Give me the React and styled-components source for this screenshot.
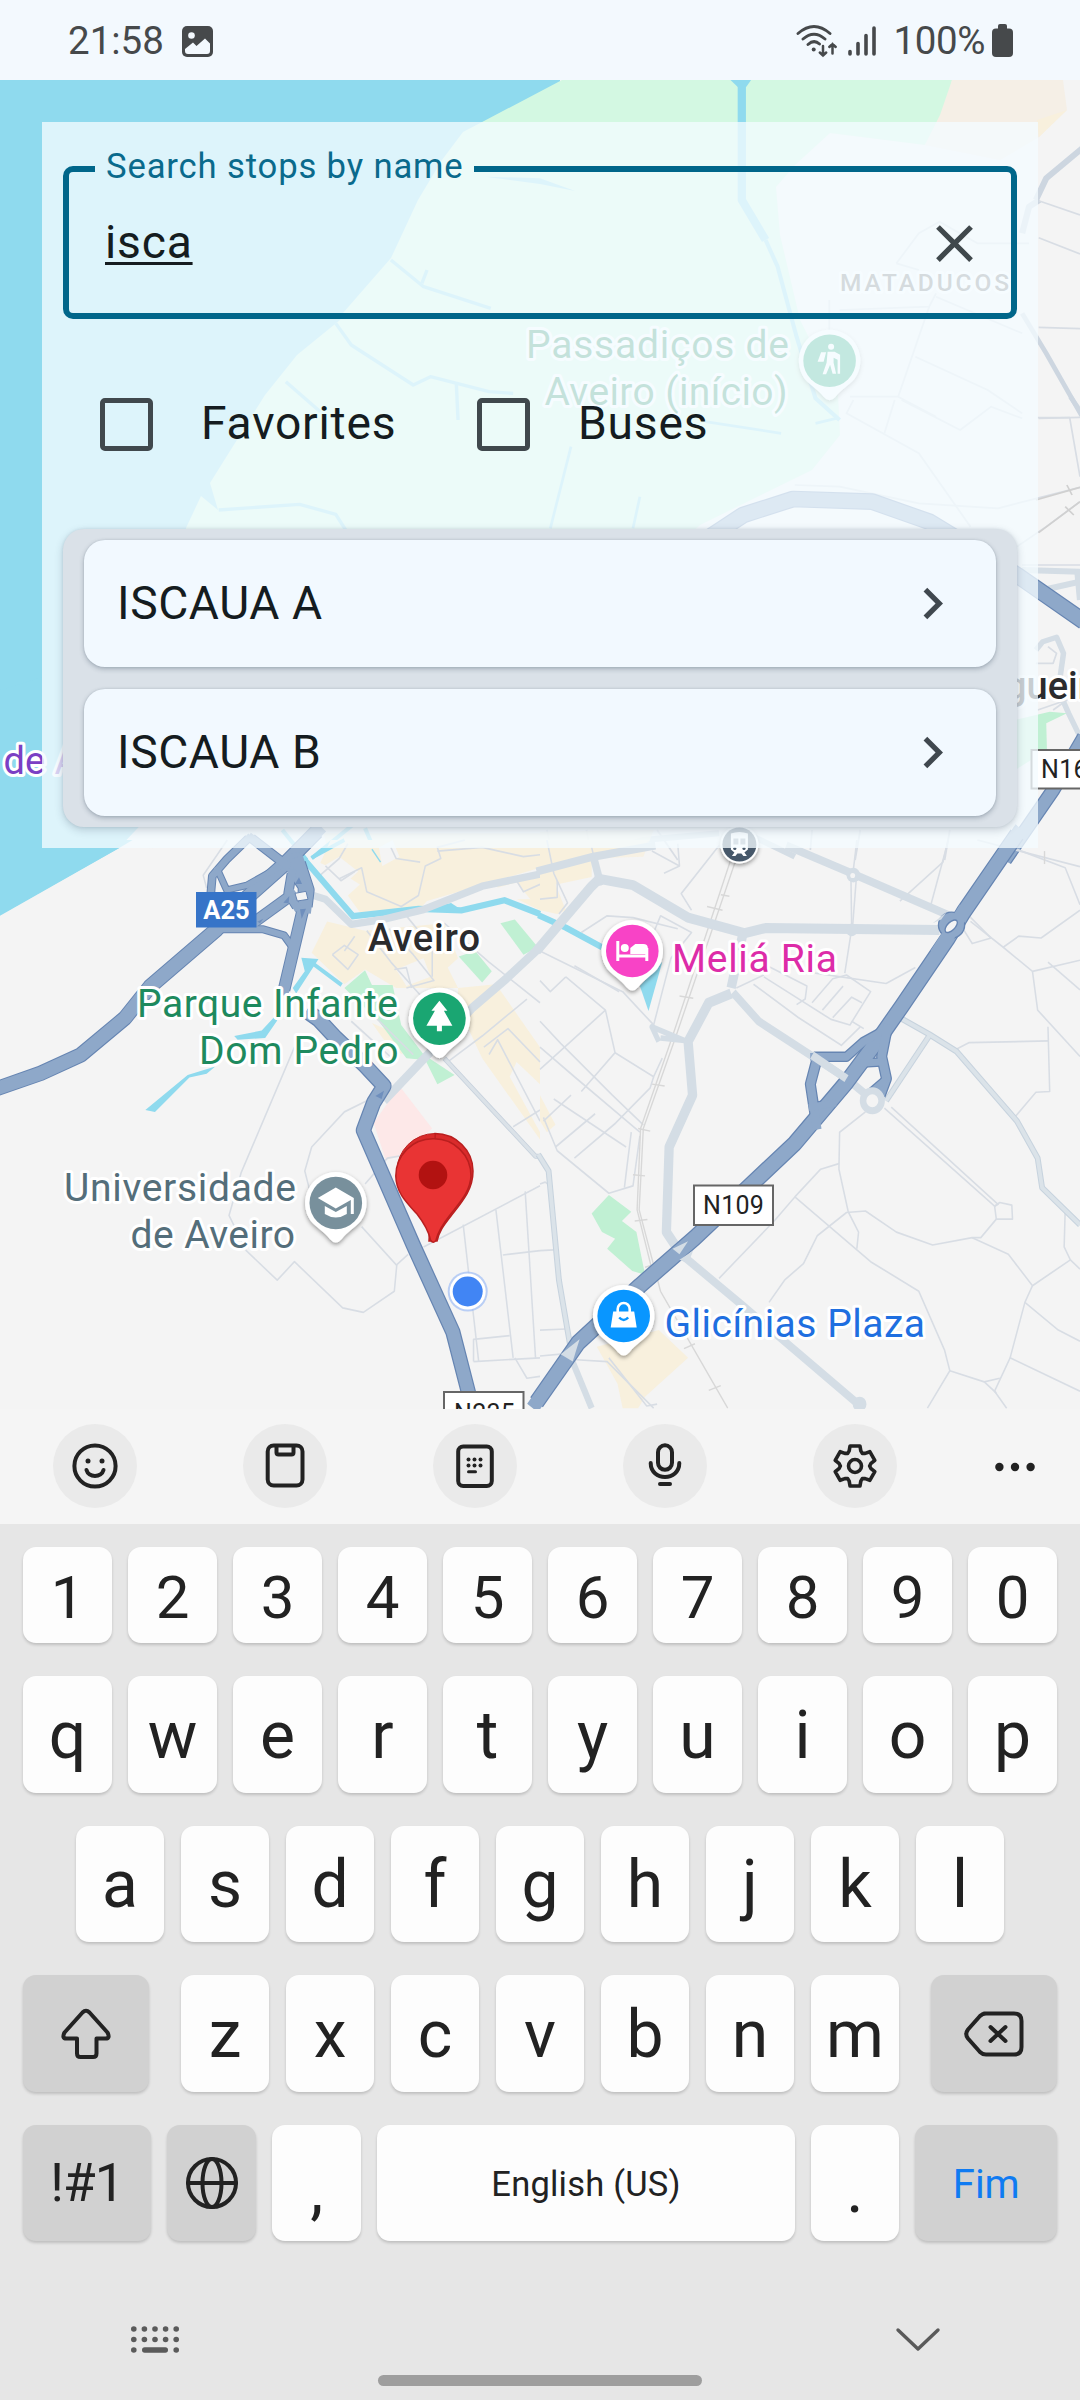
import React from "react";
import styled, { createGlobalStyle } from "styled-components";

const GlobalStyle = createGlobalStyle`
  * { box-sizing: border-box; }
  body { margin: 0; background: #e6e6e6; font-family: Roboto, "Liberation Sans", sans-serif; }
`;

const Screen = styled.div`
  width: 1080px;
  height: 2400px;
  display: flex;
  flex-direction: column;
  overflow: hidden;
`;

/* ---------- status bar ---------- */

const StatusBar = styled.header`
  height: 80px;
  flex: none;
  display: flex;
  align-items: center;
  justify-content: space-between;
  padding: 0 67px 0 68px;
  background: #f3f9fe;
  color: #46494b;
  font-size: 38.5px;
  line-height: 80px;
`;

const StatusGroup = styled.div`
  display: flex;
  align-items: center;
  gap: ${(p) => p.$gap}px;
  padding-top: 2px;
`;

const BatteryLevel = styled.span`
  margin: 0 -3px 0 7px;
  letter-spacing: -0.4px;
`;

/* ---------- map ---------- */

const MapArea = styled.main`
  height: 1329px;
  flex: none;
  display: grid;
  overflow: hidden;
  background: #f4f4f4;

  > * { grid-area: 1 / 1; }
`;

const MapDrawing = styled.svg`
  display: block;
  font-family: Roboto, "Liberation Sans", sans-serif;
`;

const Halo = styled.text`
  paint-order: stroke;
  stroke: #fff;
  stroke-width: 6px;
  stroke-linejoin: round;
  font-size: ${(p) => p.$size || 39}px;
  font-weight: ${(p) => p.$weight || 400};
`;

/* ---------- search panel ---------- */

const SearchPanel = styled.section`
  width: 996px;
  height: 726px;
  margin: 42px 0 0 42px;
  padding: 27px 21px 0;
  background: rgba(243, 251, 255, 0.78);
  color: #151c20;
  font-size: 46.2px;
  z-index: 1;
`;

const SearchField = styled.fieldset`
  height: 170px;
  margin: 0;
  padding: 0 25px 0 26px;
  border: 6px solid #00668a;
  border-radius: 10px;
`;

const FieldLabel = styled.legend`
  height: 40px;
  padding: 0 10px 6px 11px;
  font-size: 34.65px;
  line-height: 34px;
  letter-spacing: 0.85px;
  color: #0a6a8c;
`;

const FieldBody = styled.div`
  height: 108px;
  display: flex;
  align-items: center;
  justify-content: space-between;
  padding-left: 10px;
`;

const Query = styled.span`
  padding-bottom: 3px;
  letter-spacing: 0.8px;
  text-decoration: underline;
  text-decoration-thickness: 2.5px;
  text-underline-offset: 3.5px;
  text-decoration-skip-ink: none;
`;

const Filters = styled.div`
  height: 53px;
  display: flex;
  margin: 79px 0 0 37px;
`;

const Filter = styled.label`
  width: 377px;
  display: flex;
  align-items: center;
  gap: 48px;
  line-height: 51px;
  letter-spacing: 0.8px;
`;

const FilterName = styled.span`
  padding-bottom: 2px;
`;

const Box = styled.span`
  width: 53px;
  height: 53px;
  border: 5px solid #40484d;
  border-radius: 5px;
`;

const Results = styled.div`
  height: 298px;
  margin-top: 77.5px;
  padding: 11px 21px;
  display: flex;
  flex-direction: column;
  gap: 22px;
  border-radius: 21px;
  background: #dae1e8;
  box-shadow: 0 3px 8px rgba(40, 60, 80, 0.22), 0 0 3px rgba(40, 60, 80, 0.12);
`;

const ResultCard = styled.div`
  height: 127px;
  display: flex;
  align-items: center;
  justify-content: space-between;
  padding: 0 32.5px 0 33px;
  border-radius: 21px;
  background: #f2f9ff;
  letter-spacing: 0.6px;
  box-shadow: 0 2px 5px rgba(40, 60, 80, 0.3), 0 0 2px rgba(40, 60, 80, 0.15);
`;

/* ---------- keyboard ---------- */

const Tools = styled.div`
  height: 115px;
  flex: none;
  display: flex;
  align-items: center;
  gap: 106px;
  padding: 0 0 1px 52.5px;
  background: #f5f5f5;
`;

const Tool = styled.button`
  width: 84px;
  height: 84px;
  flex: none;
  display: grid;
  place-items: center;
  padding: 0;
  border: 0;
  border-radius: 50%;
  margin-left: ${(p) => (p.$plain ? -29.5 : 0)}px;
  background: ${(p) => (p.$plain ? "transparent" : "#eaeaea")};
`;

const Keyboard = styled.section`
  height: 758px;
  flex: none;
  padding: 23px 22.5px 0;
  display: flex;
  flex-direction: column;
  gap: 33px;
  background: #e6e6e6;
`;

const KeyRow = styled.div`
  height: ${(p) => p.$height || 116.5}px;
  display: flex;
  justify-content: center;
  gap: ${(p) => p.$gap || 16}px;
`;

const Key = styled.button`
  width: ${(p) => p.$width || 89}px;
  height: 100%;
  flex: none;
  display: flex;
  align-items: center;
  justify-content: center;
  margin: 0 ${(p) => p.$after || 0}px 0 ${(p) => p.$before || 0}px;
  padding: ${(p) => p.$drop || 0}px 0 0;
  border: 0;
  border-radius: 13px;
  background: ${(p) => (p.$dark ? "#d1d1d1" : "#fdfdfd")};
  color: ${(p) => p.$color || "#222"};
  font-family: inherit;
  font-size: ${(p) => p.$size || 66}px;
  line-height: 1;
  letter-spacing: ${(p) => p.$track || 0}px;
  box-shadow: 0 2px 3px rgba(0, 0, 0, 0.17);
`;

const SystemRow = styled.footer`
  flex: 1;
  display: grid;
  grid-template-columns: 1fr 324px 1fr;
  padding-top: 34px;
  background: #e6e6e6;
`;

const SystemCell = styled.div`
  padding-top: ${(p) => p.$top || 0}px;
  padding-left: ${(p) => p.$left}px;
`;

const HomeBar = styled.div`
  align-self: start;
  height: 11px;
  margin-top: 59px;
  border-radius: 6px;
  background: #9e9e9e;
`;

/* ---------- map content ---------- */

function Lines({ d, color, width, casing, casingWidth }) {
  return (
    <g fill="none" strokeLinejoin="round">
      {casing && d.map((p, i) => <polyline key={`c${i}`} points={p} stroke={casing} strokeWidth={casingWidth} />)}
      {d.map((p, i) => (
        <polyline key={i} points={p} stroke={color} strokeWidth={width} />
      ))}
    </g>
  );
}

const MOTORWAY = "#8ea8c9";
const CASING = "#6685b2";
const ROAD = "#d4dde5";
const STREET = "#d8dde4";
const WATER = "#8fdaee";

const Motorway = ({ d, width }) => (
  <Lines d={d} color={MOTORWAY} width={width - 7} casing={CASING} casingWidth={width} />
);

/* Roads of different widths that share one outline where they join. */
function Junction({ roads, edge = 6 }) {
  return (
    <g fill="none" strokeLinejoin="round">
      {roads.map(([points, w], i) => (
        <polyline key={`c${i}`} points={points} stroke={CASING} strokeWidth={w} />
      ))}
      {roads.map(([points, w], i) => (
        <polyline key={i} points={points} stroke={MOTORWAY} strokeWidth={w - edge} strokeLinecap="square" />
      ))}
    </g>
  );
}

function SouthWestTile() {
  return (
    <g transform="translate(0 840) scale(.34439 .3699)">
      <polygon points="0,0 385,0 345,22 0,205" fill={WATER} />
      <g fill="#f8f0dd">
        <polygon points="960,0 1568,0 1568,75 1440,110 1240,165 1220,185 1045,195 1010,150 1045,120 985,85 930,62" />
        <polygon points="1440,125 1568,95 1568,190 1480,150" />
        <polygon points="950,220 1060,245 1290,225 1330,320 1300,345 1330,400 1150,400 1060,350 1000,390 905,305" />
        <polygon points="1330,400 1440,390 1568,560 1568,660 1500,600 1480,640 1568,790 1568,810 1400,590 1330,450" />
        <polygon points="1080,495 1140,520 1170,580 1130,560" />
      </g>
      <g fill="#f4f4f4">
        <polygon points="1100,20 1140,0 1160,45 1110,70" />
        <polygon points="1150,350 1230,320 1250,370 1180,395" />
        <polygon points="1440,130 1500,115 1540,160 1490,160" />
        <polygon points="940,70 985,45 1040,85 1000,120" />
      </g>
      <polygon points="1160,665 1255,780 1160,855 1120,865 1085,765" fill="#fde8e8" />
      <g fill="#c0f0d3">
        <polygon points="1453,225 1495,215 1562,290 1520,310" />
        <polygon points="1332,315 1380,300 1428,355 1400,385" />
        <polygon points="1000,400 1060,352 1080,392 1140,392 1165,500 1230,580 1320,635 1270,660 1235,595 1180,590 1100,490" />
      </g>
      <Lines
        color={STREET}
        width={4.500}
        d={[
          "855,560 700,900 665,1015 715,1110 805,1190 855,1140 995,1265 1055,1277 1145,1220 1152,1150 1050,1045",
          "1065,705 1000,735 905,830 885,895 900,950",
          "1150,1150 1185,1120",
          "1230,1100 1568,935",
          "1345,1040 1390,1410",
          "1440,1000 1490,1400",
          "1525,950 1555,1400",
          "1460,1122 1568,1110",
          "1375,1410 1375,1350 1480,1340",
          "1375,1410 1568,1400",
          "1495,1400 1530,1455 1568,1450",
          "1060,930 1125,860 1250,840",
          "1490,775 1568,730",
          "600,130 590,95 660,0",
          "985,105 1050,75 1065,140 1165,180 1215,150 1235,70 1280,50 1270,20 1350,0",
          "945,70 990,110 1030,85",
          "930,95 985,50 1010,10",
          "1135,20 1150,50 1220,60",
          "1270,30 1400,20 1520,45 1568,40",
          "1500,110 1520,140 1568,120",
          "965,310 1000,285 1040,310 1010,350 965,310",
          "1065,245 1135,330 1240,440",
          "1130,240 1200,310 1260,380 1180,400",
          "1180,205 1255,290 1255,370",
          "1145,350 1180,345 1195,400",
          "1290,225 1420,330 1568,440",
          "1030,260 1000,300",
          "1405,560 1475,510 1568,600",
          "1300,600 1400,530 1530,430",
          "1420,580 1445,540 1568,760",
          "1020,490 1150,600",
          "1080,470 1200,580",
          "900,470 1000,440",
        ]}
      />
      <g fill="none" stroke={WATER}>
        <polyline points="872,40 1025,206 1215,186 1340,190 1465,163 1568,200" strokeWidth="17" />
        <polyline points="905,48 1000,0" strokeWidth="10" />
        <polyline points="1080,25 1105,60" strokeWidth="4" />
        <polyline points="900,328 992,392" strokeWidth="11" />
      </g>
      <g fill={WATER}>
        <polygon points="422,730 545,635 625,612 600,632 550,642 450,735" />
        <polygon points="680,530 760,515 795,480 805,488 770,535 690,540" />
        <polygon points="875,318 925,322 860,415 850,400 885,355" />
        <polygon points="1270,178 1310,170 1345,192 1240,192" />
      </g>
      <Lines d={["910,150 945,160 1020,228 1110,215 1230,188 1400,125 1568,92"]} color={ROAD} width={20} />
      <Lines d={["1115,705 1370,455 1470,375 1568,290"]} color={ROAD} width={24} />
      <Lines d={["1290,590 1555,855 1568,855"]} color="#dbe2e8" width={9} casing="#c7d1dc" casingWidth={14} />
      <Motorway width={44} d={["890,462 925,485 975,535 1060,610 1115,665 1085,710 1055,785 1200,1095 1315,1330 1362,1500"]} />
      <g fill="#6f8fbd">
        <polygon points="1090,692 1115,678 1108,700" />
      </g>
    </g>
  );
}

function A25Junction() {
  return (
    <g transform="translate(180 840) scale(.33333)">
      <Junction
        roads={[
          ["-550,746 -418,700 -298,645 -165,534 -90,440 110,268 190,182 310,76 410,-25", 46],
          ["205,-5 140,58 97,108 92,165", 26],
          ["112,88 140,150 200,136 300,80", 22],
          ["215,-5 330,84", 30],
          ["110,268 250,268 312,286 338,322", 24],
          ["215,252 335,165", 36],
          ["345,55 352,110 372,140 372,195 345,310 312,450", 38],
          ["356,70 382,150 376,200", 44],
          ["335,100 325,160 350,200", 30],
        ]}
      />
      <g fill="#f4f4f4" stroke={CASING} strokeWidth="3">
        <polygon points="345,160 378,154 384,178 352,183" />
      </g>
      <g fill="#6f8fbd">
        <polygon points="345,132 357,112 366,132" />
        <polygon points="360,208 378,206 365,236" />
        <polygon points="310,188 328,168 326,190" />
        <polygon points="232,245 250,236 240,250" />
      </g>
    </g>
  );
}

function SouthEastTile() {
  return (
    <g transform="translate(540 840) scale(.34439 .3699)">
      <g fill="#f8f0dd">
        <polygon points="0,0 320,0 280,25 150,45 150,100 0,130" />
        <polygon points="0,125 45,120 75,190 50,200 0,190" />
        <polygon points="0,690 45,770 20,790 0,760" />
        <polygon points="165,1370 345,1325 430,1400 305,1505 285,1536 240,1536 225,1470" />
      </g>
      <polygon points="150,1010 200,960 265,1005 238,1030 280,1060 305,1175 268,1165 195,1105 218,1078 180,1060" fill="#c0f0d3" />
      <Lines
        color={STREET}
        width={4.500}
        d={[
          "1045,165 1170,60 1185,0",
          "1135,175 1180,20",
          "1370,20 1525,75 1568,175",
          "1215,220 1255,280 1310,265 1240,200",
          "1345,290 1390,260 1455,265 1568,190",
          "1250,220 1345,290 1430,355 1568,325",
          "1430,355 1445,460 1568,585",
          "1475,330 1568,405",
          "1475,505 1480,680 1440,682 1378,750",
          "1210,565 1245,548 1478,543",
          "945,735 870,790 868,890 895,1005 925,1060 920,1105",
          "868,875 815,890 740,965 680,1030 520,1185",
          "740,965 960,1140 1100,1220 1175,1380 1190,1435 1125,1536",
          "1000,725 1320,990 1330,985 1020,722",
          "1320,990 1335,980 1370,987 1372,1025 1325,1025 1320,990",
          "1325,1025 1280,1075 1255,1075 1140,1095 1035,1060 945,1003 890,1007 805,1070 765,1145 710,1190 665,1250",
          "1255,1075 1360,1120 1430,1205 1408,1250 1365,1400 1320,1490 1355,1536",
          "1430,1205 1540,1135 1522,1100 1525,1000",
          "1540,1135 1568,1160",
          "1408,1250 1505,1325 1568,1355",
          "1365,1400 1568,1490",
          "1190,1435 1290,1465 1335,1455",
          "1290,1465 1325,1495",
          "20,0 40,90 80,170 55,200",
          "150,20 160,60",
          "325,30 405,70 400,10",
          "360,90 405,70",
          "520,15 410,145 440,190",
          "120,250 195,205 270,210 400,240",
          "330,250 350,205 440,250 380,320 330,500",
          "0,160 50,155 50,110",
          "0,300 240,410 330,500",
          "0,380 30,410 75,370",
          "100,340 230,410",
          "0,490 60,550 210,690 300,770",
          "0,560 100,640 290,790",
          "75,370 190,460 218,575 120,680",
          "190,460 0,620",
          "218,575 330,640 355,590",
          "330,640 320,670 220,765 100,860",
          "10,750 50,840 200,955 270,935 290,800",
          "90,690 10,760",
          "160,740 45,830",
          "265,790 245,940",
          "40,700 250,830",
          "570,400 650,365",
          "620,390 750,480 875,555 930,505",
          "660,340 775,395 770,430 745,445",
          "790,440 850,375 890,365 960,410 900,500 845,485 650,370",
          "820,460 880,395",
          "850,480 905,425 935,440",
          "740,345 800,360 1005,388 1090,345",
          "905,490 940,510",
          "0,930 15,925 30,935",
          "0,1110 40,1108",
          "0,1325 75,1322",
          "0,1395 60,1390",
          "903,110 905,240 885,360",
          "918,110 908,230",
          "910,80 920,0",
          "105,1405 195,1410 330,1536",
          "200,1400 310,1530 340,1525",
        ]}
      />
      <Lines
        color="#d8d8d8"
        width={4}
        d={[
          "570,50 395,530 300,780 288,1000 350,1220 545,1536",
          "555,50 385,530 292,780 282,1000 330,1180",
          "485,180 530,190",
          "525,148 550,152",
          "405,422 445,428",
          "325,660 362,665",
          "285,780 320,787",
          "270,905 305,908",
          "275,1030 312,1026",
          "305,1155 330,1148",
          "418,1375 450,1362",
          "490,1488 525,1475",
          "1465,30 1465,65",
        ]}
      />
      <Lines d={["-5,203 75,237 180,290"]} color={WATER} width={17} />
      <polygon points="290,395 355,330 315,462" fill={WATER} />
      <Lines
        color={ROAD}
        width={27}
        d={[
          "-10,300 150,125 172,105",
          "172,105 270,122 430,210 595,252 655,238 1160,243",
          "590,250 555,400",
          "555,415 490,440 430,545 443,690 375,830 367,1060 410,1120",
        ]}
      />
      <Lines
        color={ROAD}
        width={22}
        d={[
          "-10,85 155,45 335,15",
          "155,45 172,105",
          "715,15 910,92 1190,205",
          "560,412 635,490 890,645 955,695",
          "410,1120 590,1260 930,1530",
        ]}
      />
      <Lines d={["350,535 420,542 325,505 345,545"]} color={ROAD} width={15} />
      <circle cx="172" cy="108" r="16" fill={ROAD} />
      <circle cx="910" cy="95" r="20" fill={ROAD} />
      <circle cx="908" cy="96" r="7" fill="#f4f4f4" />
      <circle cx="905" cy="243" r="17" fill={ROAD} />
      <circle cx="928" cy="1525" r="20" fill={ROAD} />
      <Lines
        color="#dbe3e9"
        width={11}
        casing="#c7d3de"
        casingWidth={17}
        d={[
          "1040,478 1130,525 1210,572 1385,760 1445,860 1458,940 1568,1040",
          "1130,530 1005,705",
          "-5,850 25,895 55,1190 90,1380",
        ]}
      />
      <Lines d={["90,1400 150,1536"]} color={ROAD} width={18} />
      <Junction
        edge={7}
        roads={[
          ["1385,-15 1230,195 1185,265 1050,450 990,530 890,655 740,820 450,1075 290,1205 110,1360 -10,1520", 46],
          ["1005,512 940,545 890,586 795,586", 28],
          ["802,600 785,660 803,770", 32],
          ["1008,510 992,585 1006,645 988,690", 32],
          ["940,603 990,600", 26],
          ["1000,650 950,690", 24],
          ["790,722 850,712", 26],
        ]}
      />
      <ellipse cx="1195" cy="230" rx="38" ry="35" fill={MOTORWAY} stroke={CASING} strokeWidth="4" />
      <Lines d={["1235,185 1150,310"]} color={MOTORWAY} width={38} />
      <ellipse cx="1194" cy="233" rx="22" ry="11" fill="#f4f4f4" stroke={CASING} strokeWidth="4" transform="rotate(-42 1194 233)" />
      <Lines d={["790,582 890,645"]} color={ROAD} width={22} />
      <circle cx="965" cy="705" r="27" fill="#f4f4f4" stroke={ROAD} strokeWidth="19" />
      <g fill={ROAD}>
        <polygon points="385,1105 430,1085 405,1120" />
        <polygon points="405,1135 445,1110 430,1145" />
        <polygon points="60,1390 115,1350 95,1410" />
        <polygon points="1140,225 1180,195 1165,215" />
      </g>
    </g>
  );
}

function NorthTiles() {
  return (
    <>
      <rect x="0" y="80" width="560" height="620" fill={WATER} />
      <polygon points="0,1040 0,700 560,540 560,860 150,830 0,916" fill="#f4f4f4" />
      <polygon points="0,690 560,520 560,780 139,827 119,848 0,915" fill={WATER} />
      <polygon points="139,827 240,760 560,700 560,860 119,848" fill="#f4f4f4" />
      <g fill="#d3f8e2">
        <polygon points="484,121 562,80 952,80 947,105 937,122 925,145 830,133 795,165 776,187 780,235 800,320 838,395 840,435 812,470 700,525 640,580 540,590 180,590 186,528 201,496 218,510 210,483 265,395 297,355 340,320 343,313 391,258 418,200 442,160 463,132" />
      </g>
      <polygon points="952,80 1063,80 1067,110 1039,137 1000,160 925,145 940,115" fill="#f5efe6" />
      <polygon points="1067,110 1039,137 1037,120" fill="#f8f0dd" />
      <g transform="scale(.34439 .33333)">
        <Lines
          color={WATER}
          width={10}
          d={[
            "1135,780 1230,860 1425,925",
            "1225,850 1240,810",
            "975,970 1020,1035 1200,1155 1250,1130 1420,1175 1490,1180",
            "1325,1150 1330,1260",
            "830,1145 930,1235",
          ]}
        />
        <polygon points="1410,530 1568,535 1670,573 1568,552" fill={WATER} />
      </g>
      <g transform="translate(0 400) scale(.34439 .33333)">
        <Lines color={WATER} width={10} d={["635,330 870,313 975,343 1010,400"]} />
      </g>
      <g transform="translate(540 0) scale(.34439 .33333)">
        <Lines color={WATER} width={24} d={["586,230 586,600 655,720"]} />
        <Lines color={WATER} width={12} d={["655,720 690,800 745,1010 800,1195 870,1260"]} />
        <polygon points="553,240 613,240 598,262 575,262" fill={WATER} />
        <Lines color="#cdd6e0" width={18} d={["1440,600 1470,535 1580,440", "1400,700 1420,620 1450,600"]} />
        <Lines color="#cdd6e0" width={14} d={["1400,940 1470,1060 1580,1260"]} />
        <Lines
          color={STREET}
          width={5}
          d={[
            "1448,602 1568,645",
            "1448,713 1568,762",
            "1448,982 1568,986",
            "1448,1255 1568,1252",
            "1035,790 1100,700 1160,665 1270,730 1420,730",
            "1035,790 1100,810",
            "870,930 1130,920 1150,880",
            "1130,920 1040,1190",
            "1150,890 1400,1000",
            "900,1190 1040,1190 1150,1250",
            "1090,1070 1300,1170 1400,1240",
            "840,990 840,900",
          ]}
        />
      </g>
      <g transform="translate(540 400) scale(.34439 .33333)">
        <Lines
          color={STREET}
          width={5}
          d={[
            "910,0 890,40 1100,160 1250,380",
            "1030,0 1000,100",
            "1050,0 1220,90 1310,20 1400,55",
            "1445,53 1538,53 1568,230",
            "740,255 870,260 1100,310 1330,325 1568,262",
            "1385,440 1470,380 1568,305",
            "1400,495 1568,495",
            "1445,930 1530,900 1490,930",
            "1475,740 1500,760 1490,790 1440,790",
          ]}
        />
        <Lines color="#cdd6e0" width={14} d={["1540,-10 1580,50"]} />
        <Lines color="#d0d0d0" width={5} d={["1440,300 1568,262", "1448,398 1568,305", "1530,255 1545,285", "1525,320 1550,345"]} />
        <Lines color={WATER} width={8} d={["90,140 30,385", "290,290 270,385", "480,65 700,100", "800,70 860,55"]} />
        <Lines color={ROAD} width={18} d={["1400,510 1568,515", "1460,570 1568,545", "1560,510 1568,600"]} />
        <Lines color={ROAD} width={16} d={["1440,750 1460,725 1500,712 1520,760 1505,870 1535,940 1568,1010"]} />
        <polygon points="1380,960 1480,935 1530,940 1470,970 1472,1050 1380,1110" fill="#c0f0d3" />
        <Motorway width={50} d={["450,440 590,345 735,297 965,305 1130,365 1385,525 1580,665"]} />
        <Motorway width={42} d={["1580,1010 1490,1170 1350,1380"]} />
        <Lines color={ROAD} width={18} d={["100,1380 300,1320 520,1300", "620,1310 740,1370"]} />
        <Lines color={STREET} width={5} d={["20,1290 40,1380", "135,1290 150,1370", "340,1290 400,1380", "790,1290 785,1350", "930,1290 915,1380", "1190,1290 1175,1380", "1270,1320 1568,1400"]} />
        <polygon points="0,1295 330,1290 300,1370 0,1380" fill="#f8f0dd" opacity=".7" />
      </g>
      <g transform="translate(0 400) scale(.34439 .33333)">
        <polygon points="940,1300 1568,1300 1568,1385 960,1385" fill="#f8f0dd" opacity=".7" />
        <Lines color={WATER} width={12} d={["820,1290 890,1380", "905,1375 1030,1270", "1060,1285 1100,1380"]} />
      </g>
    </>
  );
}

function PlacePin({ x, y, color, children }) {
  return (
    <g transform={`translate(${x} ${y})`}>
      <path
        d="M0 -31 A31 31 0 0 1 25 18 C18 26 12 28 6 36 Q0 43 -6 36 C-12 28 -18 26 -25 18 A31 31 0 0 1 0 -31Z"
        fill="#fff"
        filter="url(#pinShadow)"
      />
      <circle r="26.3" fill={color} />
      {children}
    </g>
  );
}

function RoadSign({ x, y, width, height, text, textX, baseline }) {
  return (
    <g>
      <rect x={x} y={y} width={width} height={height} fill="#fff" stroke="#666" strokeWidth="2" />
      <text x={textX} y={baseline} fontSize="25" fill="#222" letterSpacing=".3">
        {text}
      </text>
    </g>
  );
}

const Label = ({ x, y, length, end, children, ...rest }) => (
  <Halo x={x} y={y} textAnchor={end ? "end" : "start"} textLength={length} {...rest}>
    {children}
  </Halo>
);

function CityMap() {
  return (
    <MapDrawing width="1080" height="1329" viewBox="0 80 1080 1329">
      <defs>
        <filter id="pinShadow" x="-30%" y="-30%" width="160%" height="160%">
          <feDropShadow dx="0" dy="2" stdDeviation="2" floodColor="#000" floodOpacity=".4" />
        </filter>
      </defs>
      <rect y="80" width="1080" height="1329" fill="#f4f4f4" />
      <NorthTiles />
      <SouthWestTile />
      <SouthEastTile />
      <A25Junction />

      <rect x="196" y="892" width="60.5" height="35.5" fill="#3674c8" />
      <text x="226.5" y="918.5" textAnchor="middle" fontSize="25.5" fontWeight="700" fill="#fff">A25</text>
      <RoadSign x={694} y={1185.5} width={79} height={39.5} text="N109" textX={703} baseline={1214.3} />
      <RoadSign x={444} y={1392} width={79.5} height={39} text="N235" textX={454} baseline={1422} />
      <RoadSign x={1031.5} y={750} width={80} height={38.5} text="N16" textX={1041} baseline={777.7} />

      <Label x={368} y={951} length={112} fill="#2b2b2d" $size={38} $weight={500}>Aveiro</Label>
      <Label x={398} y={1016.5} length={261} end fill="#1e8a5e">Parque Infante</Label>
      <Label x={398.5} y={1063.500} length={199.500} end fill="#1e8a5e">Dom Pedro</Label>
      <Label x={296} y={1200.5} length={232} end fill="#546e7a">Universidade</Label>
      <Label x={295} y={1247.5} length={164.500} end fill="#546e7a">de Aveiro</Label>
      <Label x={672} y={972} length={165} fill="#dd2ca8">Meliá Ria</Label>
      <Label x={664.500} y={1336.500} length={260.500} fill="#1f6fe0">Glicínias Plaza</Label>
      <Label x={789} y={358.3} length={263} end fill="#1e8a5e">Passadiços de</Label>
      <Label x={787.500} y={405.2} length={243} end fill="#1e8a5e">Aveiro (início)</Label>
      <Label x={840} y={290.7} length={169} fill="#6a6a6a" $size={24.5} $weight={500}>MATADUCOS</Label>
      <Label x={3.5} y={774.3} fill="#7b3fc4" $size={38}>de Aveiro</Label>
      <Label x={964} y={699} fill="#2b2b2d" $size={38} $weight={500}>Esgueira</Label>

      <PlacePin x={439.4} y={1018.7} color="#1aa672">
        <path d="M0 -18 L8 -8 H4.5 L13 7 H2.5 V12.5 H-2.5 V7 H-13 L-4.5 -8 H-8Z" fill="#fff" />
      </PlacePin>
      <PlacePin x={335.8} y={1203} color="#78909c">
        <path d="M-18 -5 L0 -15.5 L18 -5 V11 H15 V-3 L0 5.5Z" fill="#fff" />
        <path d="M-11 3 L0 9 L11 3 V11 Q0 18 -11 11Z" fill="#fff" />
      </PlacePin>
      <PlacePin x={632.3} y={951} color="#f843c6">
        <path d="M-14.5 -10 V10 M-14.5 5 H14.5 M14.5 10 V-3" stroke="#fff" strokeWidth="3" fill="none" />
        <circle cx="-7.5" cy="-3" r="4" fill="#fff" />
        <path d="M-2 3 V-3 L3 -7 H11 Q15.5 -7 15.5 -3 V3Z" fill="#fff" />
      </PlacePin>
      <PlacePin x={623.7} y={1316} color="#0996ff">
        <path d="M-10.5 -4.5 H10.5 L13 11.5 H-13Z" fill="#fff" />
        <path d="M-6 -4 V-7 A6 6 0 0 1 6 -7 V-4" fill="none" stroke="#fff" strokeWidth="2.6" />
        <path d="M-4.5 1.5 Q0 6.5 4.5 1.5" fill="none" stroke="#0996ff" strokeWidth="2.4" />
      </PlacePin>
      <PlacePin x={829.6} y={360.7} color="#1aa672">
        <circle cx="1.5" cy="-14" r="3" fill="#fff" />
        <path d="M-8.5 -8.5 H-3.5 L-6 1 H-12Z M-2 -9 H5 L10.5 -6 V13 H8 V-1 L4 -3 V2 L6.5 13 H3 L.5 4 L-3.5 13.5 H-7 L-3 2Z" fill="#fff" />
      </PlacePin>

      <g transform="translate(739.4 844.5)" filter="url(#pinShadow)">
        <circle r="19" fill="#fff" />
        <circle r="17" fill="#47596b" />
        <path d="M-8.5 -11 Q0 -14 8.5 -11 V5 L5 8 L7.5 11.5 H4 L2 9 H-2 L-4 11.5 H-7.5 L-5 8 L-8.5 5Z" fill="#fff" />
        <path d="M-6 -6 H-1 V0 H-6Z M1 -6 H6 V0 H1Z" fill="#8b97a3" />
        <circle cx="-4.6" cy="4" r="1.6" fill="#47596b" />
        <circle cx="4.6" cy="4" r="1.6" fill="#47596b" />
      </g>

      <path
        d="M435 1133.5 A38 37.5 0 0 1 473 1171 C473 1190 462 1202 451 1216 C443 1226 439 1232 437 1241 H429 Z"
        fill="#d92b2b"
        stroke="#b91f1f"
        strokeWidth="1.5"
      />
      <path d="M435 1133.5 A38 37.5 0 0 0 397 1171 L435 1180Z" fill="#d92b2b" stroke="#b91f1f" strokeWidth="1" />
      <path
        d="M433 1138.8 A37 37 0 0 1 471 1176 C470 1192 460 1202 450 1215 C442 1225 438 1232 436 1240 Q433.5 1244.500 430.500 1240 C428.500 1230 424 1223 417 1214 C406 1202 396 1192 395.8 1176 A37 37 0 0 1 433 1138.8Z"
        fill="#e93434"
        stroke="#b91f1f"
        strokeWidth="1.5"
      />
      <circle cx="433" cy="1175" r="14.3" fill="#b21211" />

      <circle cx="467.7" cy="1291.500" r="20" fill="#9fbdf5" opacity=".7" />
      <circle cx="467.7" cy="1291.500" r="18" fill="#fff" />
      <circle cx="467.7" cy="1291.500" r="15" fill="#4185f4" />
    </MapDrawing>
  );
}

/* ---------- icons ---------- */

const Stroke = ({ size = 60, children, color = "#222", width = 4 }) => (
  <svg
    width={size}
    height={size}
    viewBox={`${-size / 2} ${-size / 2} ${size} ${size}`}
    fill="none"
    stroke={color}
    strokeWidth={width}
    strokeLinecap="round"
    strokeLinejoin="round"
  >
    {children}
  </svg>
);

const PictureIcon = () => (
  <svg width="31" height="31" viewBox="0 0 31 31">
    <rect width="31" height="31" rx="5" fill="#46494b" />
    <circle cx="9.500" cy="9.500" r="3.300" fill="#f3f9fe" />
    <path d="M3 23 L11 16.500 L14.500 20 L23 12.500 L28 17.500 V25 Q28 28 25 28 H6 Q3 28 3 25Z" fill="#f3f9fe" />
  </svg>
);

const WifiIcon = () => (
  <svg width="42" height="34" viewBox="0 0 42 34" fill="none" stroke="#46494b" strokeWidth="2.900" strokeLinecap="round">
    <path d="M2 9.500 Q18 -4.500 34 9.500 M7 15 Q18 5.500 29 15 M12 20.500 Q18 15 23.500 20" />
    <circle cx="17.700" cy="25.500" r="2" fill="#46494b" stroke="none" />
    <path d="M27 22 V31.500 M23.800 28.500 L27 31.500 L30.200 28.500 M36.500 29.500 V20 M33.300 23 L36.500 20 L39.700 23" strokeWidth="2.500" />
  </svg>
);

const SignalIcon = () => (
  <svg width="28" height="30" viewBox="0 0 28 30" stroke="#46494b" strokeWidth="3.600" strokeLinecap="round">
    <path d="M2 25.500 V28 M10 17.500 V28 M18 9.500 V28 M26 2 V28" />
  </svg>
);

const BatteryIcon = () => (
  <svg width="21" height="34" viewBox="0 0 21 34" fill="#46494b">
    <rect x="6" y="0" width="9" height="8" rx="2" />
    <rect x="0" y="4.500" width="21" height="28.500" rx="4" />
  </svg>
);

const MaterialIcon = ({ d, color }) => (
  <svg width="63" height="63" viewBox="0 0 24 24" fill={color}>
    <path d={d} />
  </svg>
);

const gearPoints = Array.from({ length: 6 })
  .flatMap((_, k) => {
    const base = -90 + 60 * k;
    return [
      [-21, 16.2],
      [-14, 20.6],
      [14, 20.6],
      [21, 16.2],
      [30, 14.6],
    ].map(([offset, r]) => {
      const a = ((base + offset) * Math.PI) / 180;
      return `${(r * Math.cos(a)).toFixed(2)},${(r * Math.sin(a)).toFixed(2)}`;
    });
  })
  .join(" ");

const tools = [
  <Stroke key="emoji">
    <circle r="20.600" />
    <circle cx="-7" cy="-5" r="2.500" fill="#222" stroke="none" />
    <circle cx="7" cy="-5" r="2.500" fill="#222" stroke="none" />
    <path d="M-8.500 4 A8.700 7.500 0 0 0 8.500 4" />
  </Stroke>,
  <Stroke key="clipboard">
    <rect x="-17.300" y="-20.500" width="34.800" height="40" rx="6" />
    <path d="M-8.500 -20 V-13.500 Q-8.500 -11.500 -6.500 -11.500 H6.500 Q8.500 -11.500 8.500 -13.500 V-20" />
  </Stroke>,
  <Stroke key="layout">
    <rect x="-16.800" y="-19.500" width="33.600" height="39.500" rx="5" />
    <g fill="#222" stroke="none">
      {[-6.5, -0.5, 5.5].map((x) => [-6.5, -0.5].map((y) => <circle key={`${x}${y}`} cx={x} cy={y} r="2" />))}
    </g>
    <path d="M-6.500 5.700 H0.500" strokeWidth="3" />
  </Stroke>,
  <Stroke key="mic">
    <rect x="-7" y="-20.700" width="14" height="24.500" rx="7" />
    <path d="M-14.300 -3 C-14.300 15.500 14.300 15.500 14.300 -3 M-5 18 H5" />
  </Stroke>,
  <Stroke key="settings" width={3.6}>
    <polygon points={gearPoints} />
    <circle r="6.500" />
  </Stroke>,
];

const ShiftIcon = () => (
  <Stroke>
    <path d="M-3.500 -21.500 Q0 -25 3.500 -21.500 L21.500 -1.500 Q24.500 4.500 19.500 4.500 H10.500 V19.500 Q10.500 23 7 23 H-5.500 Q-9 23 -9 19.500 V4.500 H-19.500 Q-24.500 4.500 -21.500 -1.500Z" />
  </Stroke>
);

const BackspaceIcon = () => (
  <Stroke size={64}>
    <path d="M-10 -20.500 H20 Q27.500 -20.500 27.500 -13 V13 Q27.500 20.500 20 20.500 H-8 Q-11.500 20.500 -14 18 L-26 4.500 Q-29.500 0 -26 -4.500 L-14 -18 Q-11.500 -20.500 -8 -20.500" />
    <path d="M-3.500 -7 L11.500 7 M11.500 -7 L-3.500 7" />
  </Stroke>
);

const GlobeIcon = () => (
  <Stroke>
    <circle r="24" />
    <ellipse rx="9.500" ry="24" />
    <path d="M-24 0 H24" />
  </Stroke>
);

const HideKeyboardGrid = () => (
  <svg width="50" height="28" viewBox="0 0 50 28" fill="#5a5a5a">
    {[0, 1, 2, 3, 4].map((c) => [0, 1].map((r) => <circle key={`${c}-${r}`} cx={2.8 + c * 10.6} cy={3 + r * 10.5} r="2.800" />))}
    <circle cx="2.800" cy="24" r="2.800" />
    <circle cx="45.200" cy="24" r="2.800" />
    <rect x="11" y="21.300" width="26" height="5.400" rx="2.700" />
  </svg>
);

export default function App() {
  return (
    <Screen>
      <GlobalStyle />
      <StatusBar>
        <StatusGroup $gap={18}>
          <span>21:58</span>
          <PictureIcon />
        </StatusGroup>
        <StatusGroup $gap={10}>
          <WifiIcon />
          <SignalIcon />
          <BatteryLevel>100%</BatteryLevel>
          <BatteryIcon />
        </StatusGroup>
      </StatusBar>

      <MapArea>
        <CityMap />
        <SearchPanel>
          <SearchField>
            <FieldLabel>Search stops by name</FieldLabel>
            <FieldBody>
              <Query>isca</Query>
              <MaterialIcon
                color="#40484c"
                d="M19 6.410 17.590 5 12 10.590 6.410 5 5 6.410 10.590 12 5 17.590 6.410 19 12 13.410 17.590 19 19 17.590 13.410 12z"
              />
            </FieldBody>
          </SearchField>
          <Filters>
            <Filter><Box /><FilterName>Favorites</FilterName></Filter>
            <Filter><Box /><FilterName>Buses</FilterName></Filter>
          </Filters>
          <Results>
            {["ISCAUA A", "ISCAUA B"].map((name) => (
              <ResultCard key={name}>
                {name}
                <MaterialIcon color="#40484f" d="M10 6 8.590 7.410 13.170 12l-4.580 4.590L10 18l6-6z" />
              </ResultCard>
            ))}
          </Results>
        </SearchPanel>
      </MapArea>

      <Tools>
        {tools.map((icon) => (
          <Tool key={icon.key}>{icon}</Tool>
        ))}
        <Tool $plain>
          <Stroke>
            {[-15.6, 0, 15.6].map((x) => (
              <circle key={x} cx={x} cy="1" r="4.200" fill="#222" stroke="none" />
            ))}
          </Stroke>
        </Tool>
      </Tools>

      <Keyboard>
        <KeyRow $height={96}>
          {[..."1234567890"].map((c) => (
            <Key key={c} $size={60} $drop={5}>{c}</Key>
          ))}
        </KeyRow>
        <KeyRow $height={117}>
          {[..."qwertyuiop"].map((c) => (
            <Key key={c} $drop={2}>{c}</Key>
          ))}
        </KeyRow>
        <KeyRow $gap={17} $height={116}>
          {[..."asdfghjkl"].map((c) => (
            <Key key={c} $drop={2} $width={88}>{c}</Key>
          ))}
        </KeyRow>
        <KeyRow $height={117} $gap={16.5}>
          <Key $dark $width={125.5} $after={15.5}><ShiftIcon /></Key>
          {[..."zxcvbnm"].map((c) => (
            <Key key={c} $drop={2} $width={88.5}>{c}</Key>
          ))}
          <Key $dark $width={125.5} $before={15.5}><BackspaceIcon /></Key>
        </KeyRow>
        <KeyRow $height={116}>
          <Key $dark $width={128.5} $size={53} $track={-0.8} $drop={1}>!#1</Key>
          <Key $dark $width={89}><GlobeIcon /></Key>
          <Key $drop={14} $width={89}>,</Key>
          <Key $width={417.5} $size={34.5} $track={0.2} $drop={2}>English (US)</Key>
          <Key $drop={14} $width={88.5}>.</Key>
          <Key $dark $width={142} $size={40} $color="#0f7bf2" $drop={4}>Fim</Key>
        </KeyRow>
      </Keyboard>

      <SystemRow>
        <SystemCell $left={131} $top={10}><HideKeyboardGrid /></SystemCell>
        <HomeBar />
        <SystemCell $left={193}>
          <Stroke size={46} color="#5a5a5a" width={3.4}>
            <path d="M-20 -9 L0 10 L20 -9" />
          </Stroke>
        </SystemCell>
      </SystemRow>
    </Screen>
  );
}
